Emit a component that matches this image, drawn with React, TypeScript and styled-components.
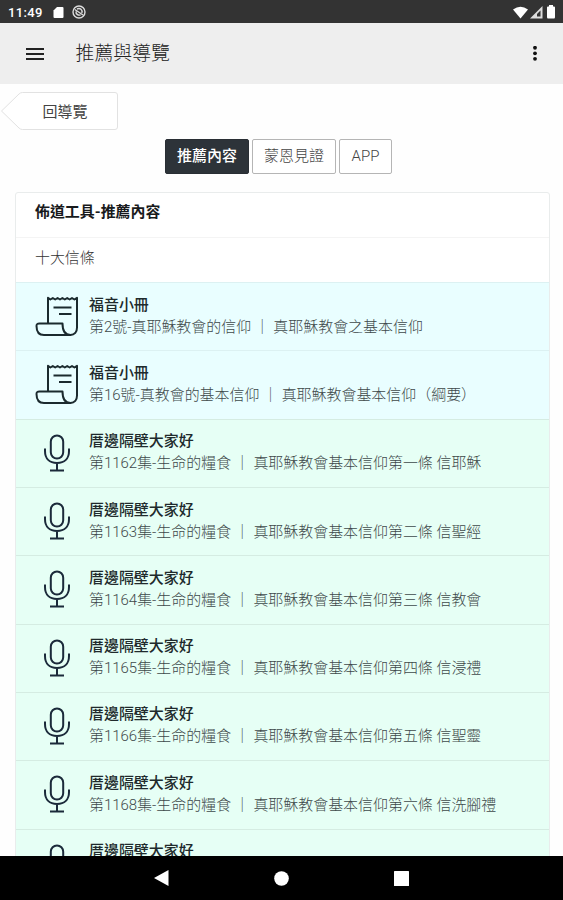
import React from "react";
import styled, { createGlobalStyle } from "styled-components";

const GlobalStyle = createGlobalStyle`
  *, *::before, *::after { box-sizing: border-box; }
  html, body { margin: 0; height: 100%; overflow: hidden; background: #fff; }
  body { font-family: Roboto, "Noto Sans CJK TC", sans-serif; color: #212529; }
  svg { display: block; flex: none; }
`;

const Screen = styled.div`
  width: 563px;
  height: 900px;
  display: flex;
  flex-direction: column;
  overflow: hidden;
  background: #fefefe;
`;

const StatusBar = styled.div`
  flex: none;
  height: 23px;
  padding: 1px 6px 0 8px;
  display: flex;
  align-items: center;
  background: #333;
  color: #fff;
  font-size: 13px;
  font-weight: 500;
  letter-spacing: 0.35px;
`;

const Clock = styled.span`
  width: 45px;
`;

const StatusIcons = styled.div<{ $end?: boolean }>`
  display: flex;
  align-items: center;
  gap: ${(p) => (p.$end ? "2px" : "8px")};
  margin-left: ${(p) => (p.$end ? "auto" : "0")};
`;

const AppBar = styled.header`
  flex: none;
  height: 61px;
  padding: 0 25px 0 26px;
  display: flex;
  align-items: center;
  background: #eee;
`;

const AppTitle = styled.h1`
  margin: 0 auto 0 31.5px;
  font-size: 18.9px;
  line-height: 28px;
  font-weight: 300;
  color: #222;
`;

const Content = styled.main`
  flex: 1;
  min-height: 0;
  overflow: hidden;
  padding: 8px 13px 0 15px;
`;

const BackButton = styled.button`
  display: grid;
  width: 118px;
  height: 38px;
  margin: 0 0 0 -15px;
  padding: 0;
  border: 0;
  background: none;
  font: 400 15px/22px Roboto, "Noto Sans CJK TC", sans-serif;
  color: #444;
  & > * { grid-area: 1 / 1; }
`;

const BackLabel = styled.span`
  align-self: center;
  padding: 1px 0 0 12px;
`;

const Tabs = styled.nav`
  display: flex;
  gap: 3px;
  margin: 9px 0 18px 150px;
`;

const Tab = styled.button<{ $width: number; $active?: boolean }>`
  width: ${(p) => p.$width}px;
  height: 35px;
  padding: 0 0 1px;
  border: 1px solid ${(p) => (p.$active ? "#292e34" : "#b5b5b5")};
  border-radius: 2px;
  background: ${(p) => (p.$active ? "#2d3339" : "#fff")};
  color: ${(p) => (p.$active ? "#fff" : "#444")};
  font: ${(p) => (p.$active ? 500 : 300)} 15px/22px Roboto, "Noto Sans CJK TC", sans-serif;
`;

const Card = styled.section`
  border: 1px solid #e9ecec;
  border-radius: 3px 3px 0 0;
  background: #fff;
`;

const CardHeader = styled.h2`
  margin: 0;
  height: 45px;
  padding: 7px 19px 0;
  border-bottom: 1px solid #f4f4f4;
  font-size: 14.95px;
  line-height: 24px;
  font-weight: 700;
  color: #181a1c;
`;

const CardNote = styled.p`
  margin: 0;
  height: 44px;
  padding: 8px 19px 0;
  font-size: 14.9px;
  line-height: 24px;
  font-weight: 300;
  color: #333;
`;

const List = styled.ul`
  margin: 0;
  padding: 0;
  list-style: none;
`;

const Item = styled.li<{ $kind: Kind }>`
  height: 68.32px;
  padding-left: 19px;
  display: flex;
  border-top: 1px solid ${(p) => (p.$kind === "book" ? "#dcf1f2" : "#d5ece2")};
  background: ${(p) => (p.$kind === "book" ? "#e9feff" : "#e6fff5")};
`;

const ItemIcon = styled.div`
  width: 54px;
  padding-top: 12px;
`;

const ItemText = styled.div`
  padding-top: 10.6px;
  font-size: 14.96px;
  line-height: 22px;
  white-space: nowrap;
`;

const ItemTitle = styled.div`
  font-weight: 500;
  color: #202a2c;
`;

const ItemDetail = styled.div`
  font-weight: 300;
  color: #3e494a;
`;

const NavBar = styled.footer`
  flex: none;
  height: 44px;
  display: flex;
  align-items: center;
  justify-content: center;
  gap: 105px;
  background: #000;
`;

type Kind = "book" | "mic";

const items: { kind: Kind; title: string; detail: string }[] = [
  { kind: "book", title: "福音小冊", detail: "第2號-真耶穌教會的信仰 ｜ 真耶穌教會之基本信仰" },
  { kind: "book", title: "福音小冊", detail: "第16號-真教會的基本信仰 ｜ 真耶穌教會基本信仰（綱要）" },
  { kind: "mic", title: "厝邊隔壁大家好", detail: "第1162集-生命的糧食 ｜ 真耶穌教會基本信仰第一條 信耶穌" },
  { kind: "mic", title: "厝邊隔壁大家好", detail: "第1163集-生命的糧食 ｜ 真耶穌教會基本信仰第二條 信聖經" },
  { kind: "mic", title: "厝邊隔壁大家好", detail: "第1164集-生命的糧食 ｜ 真耶穌教會基本信仰第三條 信教會" },
  { kind: "mic", title: "厝邊隔壁大家好", detail: "第1165集-生命的糧食 ｜ 真耶穌教會基本信仰第四條 信浸禮" },
  { kind: "mic", title: "厝邊隔壁大家好", detail: "第1166集-生命的糧食 ｜ 真耶穌教會基本信仰第五條 信聖靈" },
  { kind: "mic", title: "厝邊隔壁大家好", detail: "第1168集-生命的糧食 ｜ 真耶穌教會基本信仰第六條 信洗腳禮" },
  { kind: "mic", title: "厝邊隔壁大家好", detail: "" },
];

const ScrollIcon = () => (
  <svg width="44" height="44" viewBox="0 0 44 44" fill="none" stroke="#1b2a2e" strokeWidth="2" strokeLinejoin="round">
    <path d="M13 28V2.800L15.400 4.500 17.800 3 20.200 4.500 22.600 3 25 4.500 27.400 3 29.800 4.500 32.200 3 34.600 4.500 37 3 39.400 4.500 42 2.800V32.500C42 37 39.500 40 35.500 40C30 40 27.500 36 27.500 28.500H4.500C2 28.500 1.500 29 1.500 31C1.500 36.500 4 40 9 40H35.500" />
    <path d="M18.500 12.500H36.500M24 19H36.500" />
  </svg>
);

const MicIcon = () => (
  <svg width="44" height="44" viewBox="0 0 44 44" fill="none" stroke="#1b2a3a" strokeWidth="2">
    <rect x="15.800" y="3.500" width="12.400" height="23" rx="6.200" />
    <path d="M10 16.500V19C10 26.500 14.500 31 22 31S34 26.500 34 19V16.500M22 31V38.500M15 38.500H29" />
  </svg>
);

export default function App() {
  return (
    <Screen>
      <GlobalStyle />
      <StatusBar>
        <Clock>11:49</Clock>
        <StatusIcons>
          <svg width="11" height="13" viewBox="0 0 11 13" fill="#fff">
            <path d="M4 1H9.500Q10.500 1 10.500 2V11Q10.500 12 9.500 12H1.500Q.5 12 .5 11V4.500Z" />
          </svg>
          <svg width="14" height="14" viewBox="0 0 14 14" fill="none" stroke="#ddd" strokeWidth="1.400">
            <circle cx="7" cy="7" r="6" />
            <path d="M2.800 4.500L11 10M5 4C8 2.500 11 5 9.800 8M4 6.500C3.700 9 6 10.500 8.500 10" />
          </svg>
        </StatusIcons>
        <StatusIcons $end>
          <svg width="15" height="13" viewBox="0 0 15 13" fill="#fff">
            <path d="M0 3.500Q7.500-2 15 3.500L7.500 12.500Z" />
          </svg>
          <svg width="13" height="13" viewBox="0 0 13 13">
            <path d="M12.500 0V12.500H0Z" fill="#ddd" />
            <path d="M10.500 4.500V10.500H7V8Z" fill="#333" />
          </svg>
          <svg width="12" height="14" viewBox="0 0 12 14" fill="#fff">
            <path d="M4 0H8V1.500H9Q10 1.500 10 2.500V12Q10 13.500 9 13.500H3Q2 13.500 2 12V2.500Q2 1.500 3 1.500H4Z" />
          </svg>
        </StatusIcons>
      </StatusBar>
      <AppBar>
        <svg width="18" height="12" viewBox="0 0 18 12" stroke="#222" strokeWidth="1.800">
          <path d="M0 1H18M0 6H18M0 11H18" />
        </svg>
        <AppTitle>推薦與導覽</AppTitle>
        <svg width="6" height="16" viewBox="0 0 6 16" fill="#111">
          <circle cx="3" cy="1.800" r="1.900" />
          <circle cx="3" cy="7.300" r="1.900" />
          <circle cx="3" cy="12.800" r="1.900" />
        </svg>
      </AppBar>
      <Content>
        <BackButton>
          <svg width="118" height="38" viewBox="0 0 118 38" fill="#fff" stroke="#e2e2e2">
            <path d="M1.500 19L19 2Q20.500 .5 22.500 .5H115Q117.500 .5 117.500 3V35Q117.500 37.500 115 37.500H22.500Q20.500 37.500 19 36Z" />
          </svg>
          <BackLabel>回導覽</BackLabel>
        </BackButton>
        <Tabs>
          <Tab $width={84} $active>推薦內容</Tab>
          <Tab $width={84}>蒙恩見證</Tab>
          <Tab $width={53}>APP</Tab>
        </Tabs>
        <Card>
          <CardHeader>佈道工具-推薦內容</CardHeader>
          <CardNote>十大信條</CardNote>
          <List>
            {items.map((item, i) => (
              <Item key={i} $kind={item.kind}>
                <ItemIcon>{item.kind === "book" ? <ScrollIcon /> : <MicIcon />}</ItemIcon>
                <ItemText>
                  <ItemTitle>{item.title}</ItemTitle>
                  <ItemDetail>{item.detail}</ItemDetail>
                </ItemText>
              </Item>
            ))}
          </List>
        </Card>
      </Content>
      <NavBar>
        <svg width="15" height="16" viewBox="0 0 15 16" fill="#fff"><path d="M0 8L14.500 0V16Z" /></svg>
        <svg width="15" height="15" viewBox="0 0 15 15" fill="#fff"><circle cx="7.500" cy="7.500" r="7.300" /></svg>
        <svg width="15" height="15" viewBox="0 0 15 15" fill="#fff"><rect width="15" height="15" rx=".5" /></svg>
      </NavBar>
    </Screen>
  );
}
